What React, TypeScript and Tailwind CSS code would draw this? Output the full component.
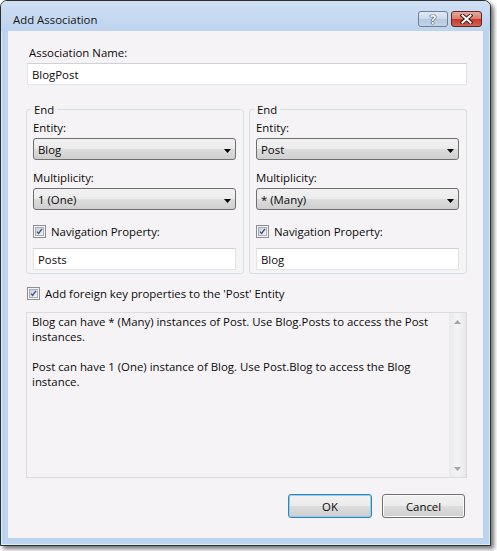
import React from "react";

function Combo({ value }: { value: string }) {
  return (
    <div className="flex h-[22px] items-center justify-between rounded-[3px] border border-[#707070] bg-[linear-gradient(#f2f2f2_0%,#ebebeb_50%,#dddddd_50%,#cfcfcf_100%)] pl-[4px] pr-[4px]">
      <span>{value}</span>
      <svg width="7" height="4" viewBox="0 0 7 4" className="mt-[3px]">
        <path d="M0 0h7L3.5 4z" fill="#000" />
      </svg>
    </div>
  );
}

function Check() {
  return (
    <span className="flex h-[13px] w-[13px] shrink-0 items-center justify-center border border-[#8e8f8f] bg-[#f4f4f4]">
      <span className="flex h-[9px] w-[9px] items-center justify-center border border-[#a9b0b9] bg-[linear-gradient(135deg,#c9d0d8,#f2f4f7)]">
        <svg width="9" height="9" viewBox="0 0 9 9">
          <path d="M1.3 4.6 L3.4 7 L7.7 1.2" fill="none" stroke="#3d5184" strokeWidth="1.7" />
        </svg>
      </span>
    </span>
  );
}

function TextBox({ value }: { value: string }) {
  return (
    <div className="flex h-[22px] items-center border border-[#e2e3ea] border-t-[#cfd1d8] bg-white pl-[4px]">
      {value}
    </div>
  );
}

function EndGroup({ entity, multiplicity, nav }: { entity: string; multiplicity: string; nav: string }) {
  return (
    <fieldset className="min-w-0 flex-1 rounded-[3px] border border-[#d5dfe5] pb-[3px] pl-[6px] pr-[7px]">
      <legend className="-ml-[2px] px-[3px]">End</legend>
      <div className="mt-[3px]">Entity:</div>
      <div className="mt-[3px]">
        <Combo value={entity} />
      </div>
      <div className="mt-[10px]">Multiplicity:</div>
      <div className="mt-[3px]">
        <Combo value={multiplicity} />
      </div>
      <div className="mt-[14px] flex items-center gap-[5px]">
        <Check />
        <span>Navigation Property:</span>
      </div>
      <div className="mt-[9px]">
        <TextBox value={nav} />
      </div>
    </fieldset>
  );
}

export default function App() {
  return (
    <div className="h-[551px] w-[497px] bg-white font-['Open_Sans',sans-serif] text-[11.4px] leading-[15px] text-[#0a0a0a]">
      <div className="flex h-[546px] w-[491px] flex-col rounded-t-[7px] border border-[#2e2e2e] bg-[#bdd4ef] shadow-[3px_3px_4px_rgba(0,0,0,0.55),inset_0_0_0_1px_#d4f1fb]">
        {/* caption */}
        <div className="flex h-[30px] shrink-0 items-start justify-between rounded-t-[6px] bg-[linear-gradient(#cfe0f4,#bdd3ee)] pl-[12px] pr-[8px]">
          <span className="pt-[11px] text-[#161616]">Add Association</span>
          <div className="flex gap-[3px] pt-[10px]">
            <div className="flex h-[16px] w-[30px] items-center justify-center rounded-[3px] border border-[#6f7f94] bg-[linear-gradient(#e1eaf5_0%,#cbd9ea_50%,#b6c8de_51%,#c3d4e8_100%)]">
              <span className="text-[13px] font-bold leading-[13px] text-white [text-shadow:0_0_1px_#2b3340,0_0_1px_#2b3340,0_0_1px_#2b3340]">
                ?
              </span>
            </div>
            <div className="flex h-[16px] w-[31px] items-center justify-center rounded-[3px] border border-[#5c2a25] bg-[linear-gradient(#eaa89c_0%,#dc7b6c_50%,#c63a2b_51%,#d2634f_100%)]">
              <svg width="13" height="10" viewBox="0 0 13 10">
                <path d="M2.5 1.5 L10.5 8.5 M10.5 1.5 L2.5 8.5" stroke="#3a1a17" strokeWidth="4" strokeLinecap="square" />
                <path d="M2.5 1.5 L10.5 8.5 M10.5 1.5 L2.5 8.5" stroke="#ffffff" strokeWidth="2" strokeLinecap="square" />
              </svg>
            </div>
          </div>
        </div>

        {/* client area */}
        <div className="mx-[7px] flex h-[507px] shrink-0 flex-col bg-[#f6f3f6] pl-[18px] pr-[16px] pt-[14px]">
          <div className="pl-[3px]">Association Name:</div>
          <div className="ml-[1px] mt-[3px]">
            <TextBox value="BlogPost" />
          </div>

          <div className="mt-[17px] flex gap-[5px]">
            <EndGroup entity="Blog" multiplicity="1 (One)" nav="Posts" />
            <EndGroup entity="Post" multiplicity="* (Many)" nav="Blog" />
          </div>

          <div className="ml-[1px] mt-[12px] flex items-center gap-[5px]">
            <Check />
            <span>Add foreign key properties to the 'Post' Entity</span>
          </div>

          <div className="mt-[11px] flex h-[166px] border border-[#dcdcdc]">
            <div className="flex-1 whitespace-nowrap pl-[5px] pt-[1px]">
              <div>Blog can have * (Many) instances of Post. Use Blog.Posts to access the Post</div>
              <div>instances.</div>
              <div className="h-[15px]" />
              <div>Post can have 1 (One) instance of Blog. Use Post.Blog to access the Blog</div>
              <div>instance.</div>
            </div>
            <div className="flex w-[17px] flex-col justify-between bg-[linear-gradient(90deg,#e9e9eb,#f3f3f5_50%,#e9e9eb)]">
              <div className="flex h-[17px] items-center justify-center">
                <svg width="7" height="4" viewBox="0 0 7 4">
                  <path d="M0 4h7L3.5 0z" fill="#a3a3a3" />
                </svg>
              </div>
              <div className="flex h-[17px] items-center justify-center">
                <svg width="7" height="4" viewBox="0 0 7 4">
                  <path d="M0 0h7L3.5 4z" fill="#a3a3a3" />
                </svg>
              </div>
            </div>
          </div>

          <div className="mt-[16px] flex justify-end gap-[10px] pr-[2px]">
            <button className="flex h-[24px] w-[84px] items-center justify-center rounded-[3px] border border-[#3c7fb1] bg-[linear-gradient(#f2f2f2_0%,#ebebeb_50%,#dddddd_50%,#cfcfcf_100%)] shadow-[inset_0_0_0_1px_#7fd4f7]">
              OK
            </button>
            <button className="flex h-[24px] w-[83px] items-center justify-center rounded-[3px] border border-[#707070] bg-[linear-gradient(#f2f2f2_0%,#ebebeb_50%,#dddddd_50%,#cfcfcf_100%)] shadow-[inset_0_0_0_1px_#fcfcfc]">
              Cancel
            </button>
          </div>
        </div>
      </div>
    </div>
  );
}
